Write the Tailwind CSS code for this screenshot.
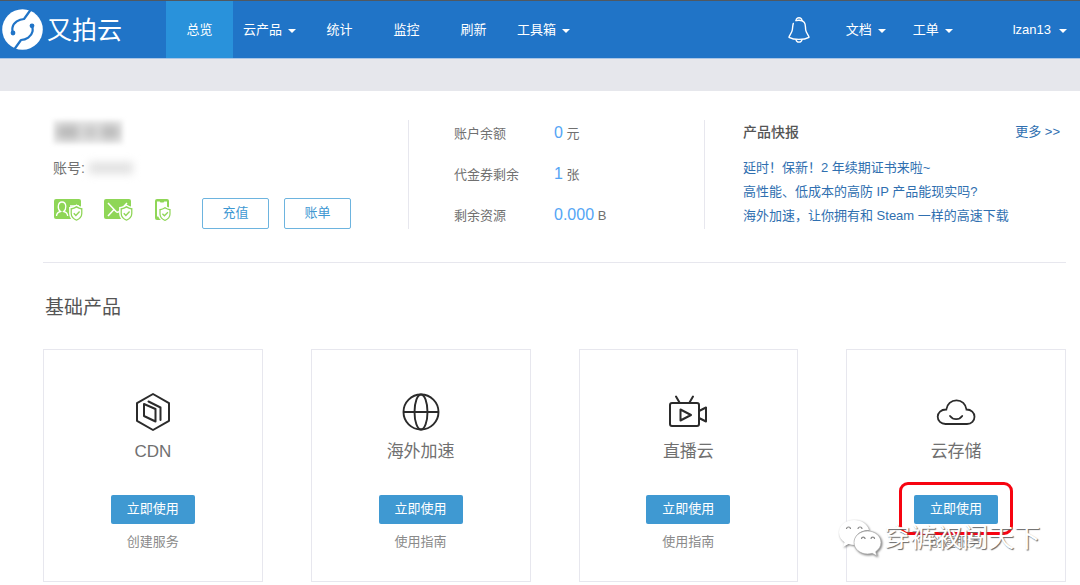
<!DOCTYPE html>
<html lang="zh-CN">
<head>
<meta charset="utf-8">
<meta name="viewport" content="width=device-width, initial-scale=1">
<title>又拍云</title>
<script src="https://cdn.jsdelivr.net/npm/@tailwindcss/browser@4"></script>
</head>
<body class="bg-white font-['Liberation_Sans','Noto_Sans_CJK_SC',sans-serif] text-[13px] leading-5 text-[#707070]">
<svg class="hidden" aria-hidden="true">
  <symbol id="caret" viewBox="0 0 8 4"><path d="M0 0h8L4 4z" fill="currentColor"/></symbol>
  <symbol id="shield" viewBox="0 0 16 18"><path d="M8 1.200c2 1.600 4 2.200 6.300 2.300v5.500c0 3.700-2.500 6.200-6.300 7.800C4.200 15.200 1.700 12.700 1.700 9V3.500C4 3.400 6 2.800 8 1.200z" fill="#8fd657" stroke="#fff" stroke-width="1.400"/><path d="M8 3.600c1.400.900 2.900 1.400 4.400 1.600V9c0 2.700-1.700 4.500-4.400 5.800C5.300 13.500 3.600 11.700 3.600 9V5.200C5.100 5 6.600 4.500 8 3.600z" fill="#fff"/><path d="M5.400 8.800l2 2 3.500-3.600" fill="none" stroke="#8fd657" stroke-width="1.300"/></symbol>
</svg>

<header class="flex h-[59px] items-stretch border-t border-b border-t-[#505860] border-b-[#a9c5e6] bg-[#2074c7] text-white">
  <a href="#" class="flex w-[166px] items-center pl-0.5 text-[25px] leading-8">
    <svg class="mr-1 size-[41px]" viewBox="0 0 41 41" fill="none" aria-hidden="true">
      <circle cx="20.500" cy="20.500" r="20.300" fill="#fff"/>
      <g stroke="#2074c7" stroke-linecap="round" stroke-linejoin="round" stroke-width="2.200">
        <path d="M28.500 1L22 10c-5 .2-10.500 3.500-11.500 8.500-.4 2 0 4 .4 5.500"/>
        <path d="M12.500 40L19 31c5-.2 10.500-3.500 11.500-8.500.4-2 0-4-.4-5.500"/>
      </g>
      <circle cx="11" cy="24" r="2.400" fill="#2074c7"/><circle cx="30" cy="16.800" r="2.400" fill="#2074c7"/>
    </svg>
    又拍云
  </a>
  <nav class="flex items-stretch">
    <a href="#" class="flex w-[67px] items-center justify-center bg-[#2992db]">总览</a>
    <button type="button" class="flex w-[73px] items-center justify-center gap-1.5">云产品<svg class="mt-0.5 h-1 w-2"><use href="#caret"/></svg></button>
    <a href="#" class="flex w-[67px] items-center justify-center">统计</a>
    <a href="#" class="flex w-[67px] items-center justify-center">监控</a>
    <a href="#" class="flex w-[67px] items-center justify-center">刷新</a>
    <button type="button" class="flex w-[73px] items-center justify-center gap-1.5">工具箱<svg class="mt-0.5 h-1 w-2"><use href="#caret"/></svg></button>
  </nav>
  <div class="ml-auto flex items-stretch pr-[13px]">
    <button type="button" aria-label="通知" class="mr-9 flex items-center">
      <svg class="h-[26px] w-[22px]" viewBox="0 0 22 26" fill="none" stroke="#fff" stroke-width="1.400" stroke-linecap="round" stroke-linejoin="round"><path d="M8.200 3.300C8 1.800 9.300.8 11 .8s3 1 2.800 2.500"/><path d="M5.300 6.500C4.600 8.500 4.700 10.500 4.300 13c-.4 3-3.300 5.800-3.300 7.300C3.500 21.700 7 22.400 11 22.400s7.500-.7 10-2.100c0-1.500-2.900-4.300-3.300-7.300-.4-3 .1-5.700-1.400-7.700C15.200 3.800 13.200 3.200 11 3.200c-1.100 0-2.100.1-3 .5"/><path d="M8 22.600c.3 1.600 1.500 2.500 3 2.500s2.700-.9 3-2.500"/></svg>
    </button>
    <button type="button" class="mr-[27px] flex items-center gap-1.5">文档<svg class="mt-0.5 h-1 w-2"><use href="#caret"/></svg></button>
    <button type="button" class="mr-[60px] flex items-center gap-1.5">工单<svg class="mt-0.5 h-1 w-2"><use href="#caret"/></svg></button>
    <button type="button" class="flex items-center gap-2">lzan13<svg class="mt-0.5 h-1 w-2"><use href="#caret"/></svg></button>
  </div>
</header>
<div class="h-8 bg-[#e6e7ec]"></div>

<main class="pr-3.5 pl-[43px]">
  <section class="grid grid-cols-[365fr_297fr_361fr] border-b border-[#e7e7ee] pt-[29px] pb-[33px]">
    <div class="pl-2.5">
      <div class="flex h-6 w-[70px] items-center justify-center gap-0.5 overflow-hidden bg-[#f3f3f3] blur-[2px]" aria-hidden="true">
        <span class="h-4 w-6 bg-[#b8b8b8] blur-[4px]"></span><span class="h-4 w-4 bg-[#c6c6c6] blur-[4px]"></span><span class="h-4 w-5 bg-[#bababa] blur-[4px]"></span>
      </div>
      <div class="mt-3.5 flex items-center gap-1 text-[14px]">账号:<span class="h-3 w-11 bg-[#e2e2e2] blur-[4px]" aria-hidden="true"></span></div>
      <div class="mt-5 flex items-start">
        <svg class="mt-px mr-[19px] h-6 w-8" viewBox="0 0 32 24" role="img" aria-label="实名认证"><rect x="1" width="27" height="20" rx="2" fill="#8fd657"/><path d="M3.500 17c.2-3 1.600-4 4-4.500-1.900-1.400-2.400-3.300-2.200-5.300C5.500 4.500 7 3 9 3s3.600 1.500 3.800 4.200c.1 2-.4 3.900-2.100 5.300 2.300.5 3.700 1.500 4 4.500M17 7h9M17 10.500h9" fill="none" stroke="#fff" stroke-width="1.300"/><use href="#shield" x="15" y="5" width="17" height="19"/></svg>
        <svg class="mt-px mr-[19px] h-6 w-8" viewBox="0 0 32 24" role="img" aria-label="邮箱认证"><rect width="27" height="20" rx="2" fill="#8fd657"/><path d="M4 4l8 8.500c1 1 2 1 3 0L23 4M4 17l6-6.500M23 17l-6-6.500" fill="none" stroke="#fff" stroke-width="1.500"/><use href="#shield" x="14" y="5" width="17" height="19"/></svg>
        <svg class="mt-px mr-[29px] h-6 w-[18px]" viewBox="0 0 18 24" role="img" aria-label="手机认证"><rect width="14" height="21" rx="2" fill="#8fd657"/><path d="M2 2.500h2.700l.8 1h3l.8-1h2.700v15h-10z" fill="#fff"/><use href="#shield" x="2" y="6" width="16" height="18"/></svg>
        <button type="button" class="mr-[15px] h-[31px] w-[67px] rounded-xs border border-[#6db4df] pb-0.5 text-[#3e98d2]">充值</button>
        <button type="button" class="h-[31px] w-[67px] rounded-xs border border-[#6db4df] pb-0.5 text-[#3e98d2]">账单</button>
      </div>
    </div>
    <dl class="grid grid-cols-[100px_1fr] content-start items-end gap-y-5 border-x border-[#e7e7ee] pt-[3px] pl-[45px]">
      <dt>账户余额</dt><dd><span class="text-base leading-5 text-[#54a5f5]">0</span> 元</dd>
      <dt>代金券剩余</dt><dd><span class="text-base leading-5 text-[#54a5f5]">1</span> 张</dd>
      <dt>剩余资源</dt><dd><span class="text-base leading-5 text-[#54a5f5]">0.000</span> B</dd>
    </dl>
    <div class="pl-[38px] text-[#2f6fb0]">
      <div class="flex items-center justify-between pt-0.5 pr-1.5">
        <h2 class="text-[14px] leading-5 font-medium text-[#555]">产品快报</h2>
        <a href="#">更多 &gt;&gt;</a>
      </div>
      <ul class="mt-3.5 leading-6">
        <li><a href="#">延时！保新！2 年续期证书来啦~</a></li>
        <li><a href="#">高性能、低成本的高防 IP 产品能现实吗?</a></li>
        <li><a href="#">海外加速，让你拥有和 Steam 一样的高速下载</a></li>
      </ul>
    </div>
  </section>

  <h2 class="mt-[31px] pl-0.5 text-[19px] leading-7 text-[#555]">基础产品</h2>

  <section class="mt-[27px] grid grid-cols-4 gap-12 pb-0.5">
    <article class="flex flex-col items-center border border-[#e7e7ee] pt-[42px] pb-[29px]">
      <svg class="size-10" viewBox="0 0 40 40" fill="none" stroke="#2b2b2b" stroke-width="2" stroke-linejoin="round" stroke-linecap="round" aria-hidden="true"><path d="M20 2l16 9.200v17.600L20 38 4 28.800V11.200z"/><path d="M11 12l11.500 5v12.500L11 24z"/><path d="M15.500 9.500L27.500 15.500V28"/></svg>
      <h3 class="mt-2 text-[17px] leading-6">CDN</h3>
      <button type="button" class="mt-[31px] h-[29px] w-[84px] rounded-xs bg-[#3f99d2] pb-0.5 text-white">立即使用</button>
      <a href="#" class="mt-2 text-[#8a8a8a]">创建服务</a>
    </article>
    <article class="flex flex-col items-center border border-[#e7e7ee] pt-[42px] pb-[29px]">
      <svg class="size-10" viewBox="0 0 40 40" fill="none" stroke="#2b2b2b" stroke-width="1.900" aria-hidden="true"><circle cx="20" cy="20" r="17.500"/><ellipse cx="20" cy="20" rx="6.500" ry="17.500"/><path d="M2.500 20h35"/></svg>
      <h3 class="mt-2 text-[17px] leading-6">海外加速</h3>
      <button type="button" class="mt-[31px] h-[29px] w-[84px] rounded-xs bg-[#3f99d2] pb-0.5 text-white">立即使用</button>
      <a href="#" class="mt-2 text-[#8a8a8a]">使用指南</a>
    </article>
    <article class="flex flex-col items-center border border-[#e7e7ee] pt-[42px] pb-[29px]">
      <svg class="size-10" viewBox="0 0 40 40" fill="none" stroke="#2b2b2b" stroke-width="2" stroke-linejoin="round" stroke-linecap="round" aria-hidden="true"><rect x="2" y="11" width="29" height="23" rx="2"/><path d="M8 4.500l3.500 6M25 4.500l-3.500 6M12.500 17.500v11l10.500-5.500zM31 19l7-3.500v14L31 26"/></svg>
      <h3 class="mt-2 text-[17px] leading-6">直播云</h3>
      <button type="button" class="mt-[31px] h-[29px] w-[84px] rounded-xs bg-[#3f99d2] pb-0.5 text-white">立即使用</button>
      <a href="#" class="mt-2 text-[#8a8a8a]">使用指南</a>
    </article>
    <article class="relative flex flex-col items-center border border-[#e7e7ee] pt-[42px] pb-[29px]">
      <svg class="size-10" viewBox="0 0 40 40" fill="none" stroke="#2b2b2b" stroke-width="1.800" stroke-linecap="round" aria-hidden="true"><path d="M9.500 32h21.500c4.500 0 7.500-3.300 7.500-7.300s-3.300-7.200-8-7.200C29.800 12 25.800 8.300 20.500 8.300S11 12 10.300 17.500C5 17.400 1.700 20.700 1.700 24.800S5 32 9.500 32z"/><path d="M14 24c1.500 2 3.700 3.200 6.200 3.200s4.600-1.200 6-3.200"/></svg>
      <h3 class="mt-2 text-[17px] leading-6">云存储</h3>
      <div class="relative mt-[31px] h-[29px]">
        <button type="button" class="h-[29px] w-[84px] rounded-xs bg-[#3f99d2] pb-0.5 text-white">立即使用</button>
        <div class="pointer-events-none absolute -top-[13px] -right-[15px] -bottom-[11px] -left-[15px] rounded-[9px] border-3 border-[#f70410]"></div>
      </div>
      <a href="#" class="mt-2 text-[#8a8a8a]">创建服务</a>
      <div class="pointer-events-none absolute top-[168px] -left-[9px] flex items-center gap-0.5 whitespace-nowrap text-[26px] leading-10 text-white [text-shadow:1px_1px_1px_#666]">
        <svg class="h-[38px] w-11 drop-shadow-[1px_1px_1px_#777]" viewBox="0 0 44 38" fill="#fff" aria-hidden="true"><path d="M16 1C7.500 1 1 6.500 1 13.500c0 4 2 7.300 5.500 9.700L5 28l5.500-3c2 .6 4 .9 6 .9C15 17 22 11 31 11 29.500 5 23.500 1 16 1z"/><path d="M29.500 12C22 12 16 17 16 23.500S22 35 29.500 35c1.700 0 3.300-.3 4.700-.7L39 37l-1.300-4.300c3.300-2.200 5.300-5.500 5.300-9.200C43 17 37 12 29.500 12z" stroke="#aaa" stroke-width=".7"/><g fill="none" stroke="#888" stroke-width="1.200"><path d="M8.500 10a2 2 0 0 1 4 0M20 10a2 2 0 0 1 4 0M23.500 20a1.800 1.800 0 0 1 3.600 0M33 20a1.800 1.800 0 0 1 3.600 0"/></g></svg>
        穿裤衩闯天下
      </div>
    </article>
  </section>
</main>
</body>
</html>
